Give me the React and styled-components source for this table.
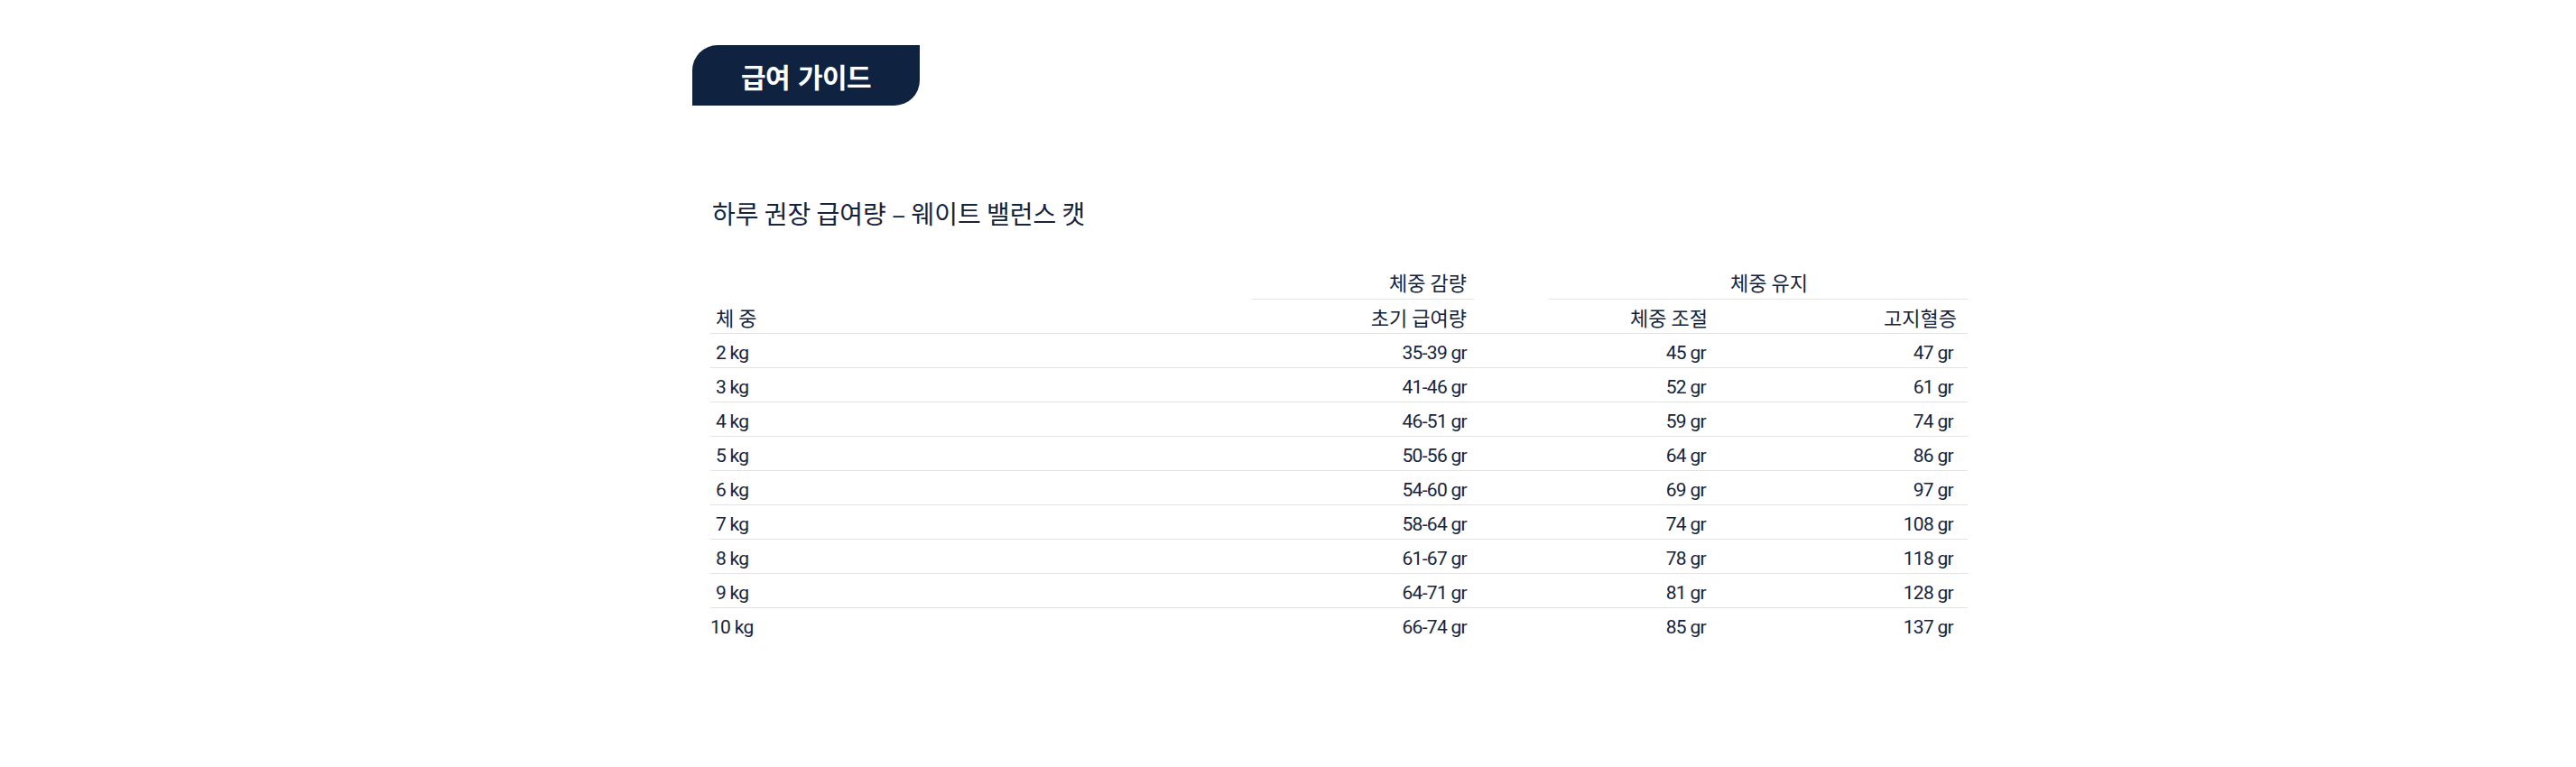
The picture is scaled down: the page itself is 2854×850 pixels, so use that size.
import React from "react";
import styled, { createGlobalStyle } from "styled-components";

const GlobalStyle = createGlobalStyle`
  body {
    margin: 0;
    background: #fff;
    font-family: "Noto Sans CJK KR", "Noto Sans", sans-serif;
    color: #15243d;
  }
`;

const Page = styled.div`
  padding: 50px 0 0 767px;
`;

const Tab = styled.div`
  width: 252px;
  height: 67px;
  background: #0f2340;
  border-radius: 28px 0 28px 0;
  display: flex;
  align-items: center;
  justify-content: center;
  color: #fff;
  font-size: 30px;
  font-weight: 700;
  letter-spacing: -0.6px;
  word-spacing: 3px;
`;

const Title = styled.h2`
  margin: 99px 0 0 22px;
  font-size: 28px;
  line-height: 40px;
  font-weight: 400;
`;

const Table = styled.div`
  margin: 41px 0 0 20px;
  width: 1393px;
  display: grid;
  grid-template-columns: 600px 246px 267px 280px;
`;

const GroupCell = styled.div`
  grid-column: ${(p) => p.span};
  margin-left: ${(p) => p.offset || 0}px;
  padding: 0 ${(p) => p.padRight || 0}px 4px ${(p) => p.padLeft || 0}px;
  border-bottom: ${(p) => (p.line ? "1px solid #e6e1df" : "none")};
  text-align: ${(p) => p.align || "right"};
  font-size: 22px;
  line-height: 30px;
`;

const HeadCell = styled.div`
  height: 37px;
  display: flex;
  align-items: center;
  justify-content: ${(p) => (p.left ? "flex-start" : "flex-end")};
  padding: 0 ${(p) => p.padRight}px 0 ${(p) => (p.left ? 6 : 0)}px;
  border-bottom: 1px solid #e6e1df;
  font-size: 22px;
`;

const Cell = styled.div`
  display: flex;
  align-items: center;
  justify-content: ${(p) => (p.left ? "flex-start" : "flex-end")};
  padding: 4px ${(p) => p.padRight}px 0 ${(p) => (p.left ? p.padLeft : 0)}px;
  box-sizing: border-box;
  border-top: ${(p) => (p.first ? "none" : "1px solid #e6e1df")};
  height: ${(p) => (p.first ? 37 : 38)}px;
  font-family: Roboto, "Noto Sans", sans-serif;
  font-size: 21px;
  letter-spacing: -0.7px;
`;

const pads = [0, 8, 10, 16];

const rows = [
  ["2 kg", "35-39 gr", "45 gr", "47 gr"],
  ["3 kg", "41-46 gr", "52 gr", "61 gr"],
  ["4 kg", "46-51 gr", "59 gr", "74 gr"],
  ["5 kg", "50-56 gr", "64 gr", "86 gr"],
  ["6 kg", "54-60 gr", "69 gr", "97 gr"],
  ["7 kg", "58-64 gr", "74 gr", "108 gr"],
  ["8 kg", "61-67 gr", "78 gr", "118 gr"],
  ["9 kg", "64-71 gr", "81 gr", "128 gr"],
  ["10 kg", "66-74 gr", "85 gr", "137 gr"],
];

export default function App() {
  return (
    <Page>
      <GlobalStyle />
      <Tab>급여 가이드</Tab>
      <Title>하루 권장 급여량 – 웨이트 밸런스 캣</Title>
      <Table>
        <GroupCell span="1" line={false} />
        <GroupCell span="2" line padRight={8}>
          체중 감량
        </GroupCell>
        <GroupCell span="3 / 5" line offset={83} align="center" padLeft={24}>
          체중 유지
        </GroupCell>

        <HeadCell left padRight={0}>
          체 중
        </HeadCell>
        <HeadCell padRight={8}>초기 급여량</HeadCell>
        <HeadCell padRight={8}>체중 조절</HeadCell>
        <HeadCell padRight={12}>고지혈증</HeadCell>

        {rows.map((r, i) =>
          r.map((v, j) => (
            <Cell
              key={i + "-" + j}
              first={i === 0}
              left={j === 0}
              padLeft={i === rows.length - 1 ? 0 : 6}
              padRight={pads[j]}
            >
              {v}
            </Cell>
          ))
        )}
      </Table>
    </Page>
  );
}
